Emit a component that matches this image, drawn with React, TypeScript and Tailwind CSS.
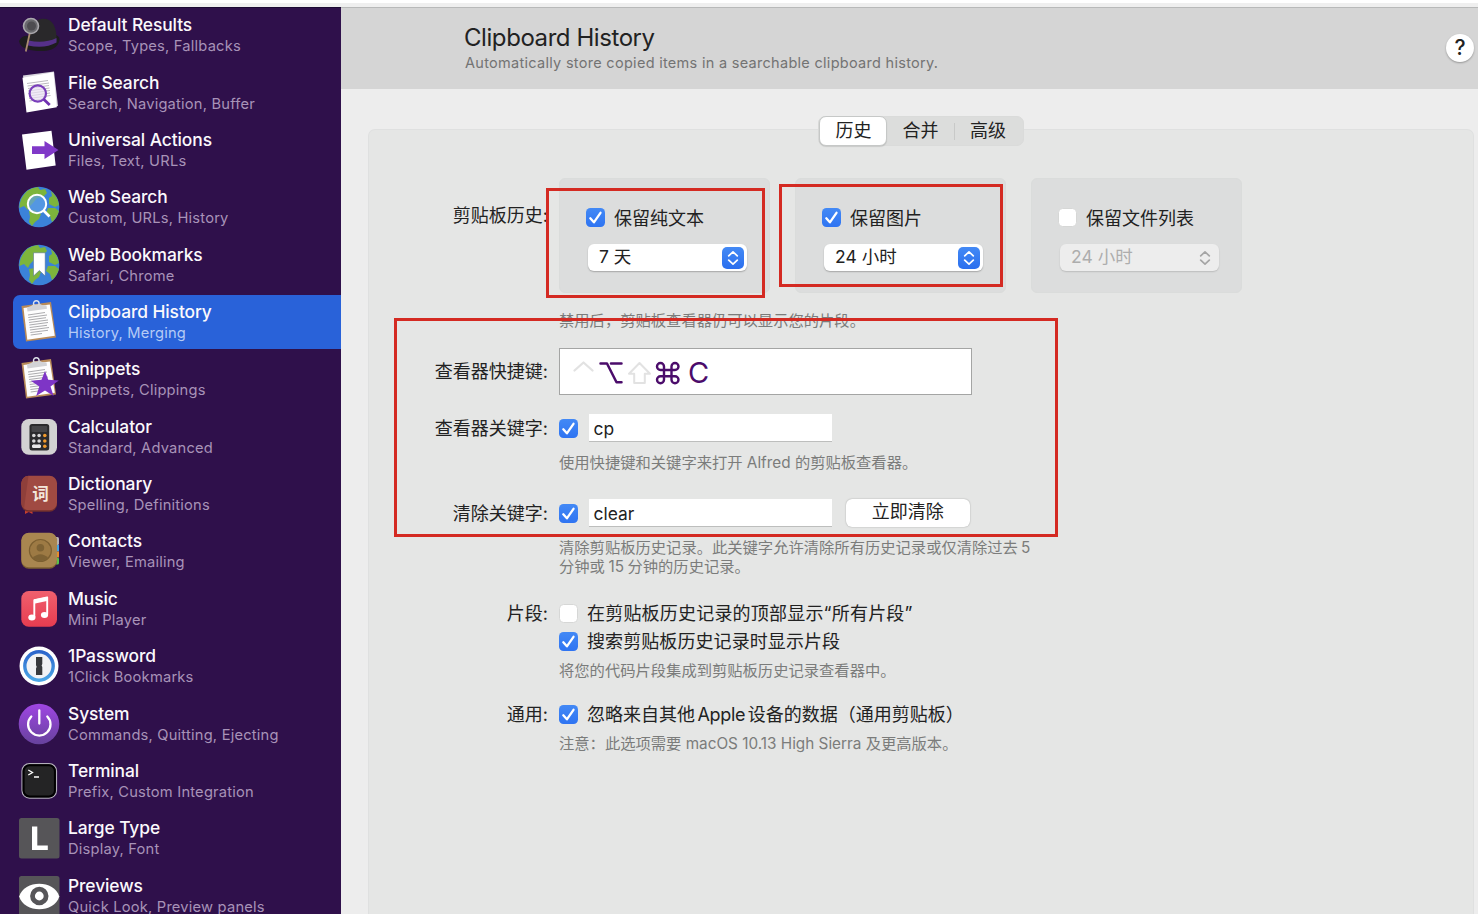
import type { ReactNode } from 'react';

function Icon({ children }: { children: ReactNode }) {
  return (
    <svg viewBox="0 0 42 42" className="h-[42px] w-[42px] shrink-0 overflow-visible">
      {children}
    </svg>
  );
}

function HatIcon() {
  return (
    <Icon>
      <path d="M1 27 Q4 21 11 22 L38 21 Q43 23 41 28 C38 36 30 37 23 37 C13 37 2 35 1 27Z" fill="#1d1c1e" />
      <path d="M11 28 C11 15 15 6 24 4.800 C34 4 39 12 38.500 27 Q28 35 11 30Z" fill="#29282a" />
      <path d="M10.500 26.500 Q26 30 38.500 24 V28.500 Q27 35 10 31.500Z" fill="#553089" />
      <path d="M11.800 19 L7.800 37.500" stroke="#a98a70" strokeWidth="1.800" />
      <circle cx="13" cy="12" r="7.500" fill="#6a6a6e" stroke="#aaa8ad" strokeWidth="1.600" />
      <circle cx="13.500" cy="12" r="4.500" fill="#4d4c50" />
    </Icon>
  );
}

function FileSearchIcon() {
  return (
    <Icon>
      <path d="M5 3.500 L36 -.5 L40 34 L9 39Z" fill="#d9d6de" />
      <path d="M4.500 5.700 L35.500 .3 L38.800 35.300 L8.500 40.600Z" fill="#fff" />
      <g stroke="#a9a7ad" strokeWidth=".8">
        <path d="M9 11.500 L30 8.500 M9.500 14 L31 11 M10 16.500 L31 13.500 M10 19 L31.500 16 M10.500 21.500 L32 18.500 M11 24 L32 21 M11 26.500 L32.500 23.500 M11.500 29 L25 27" />
      </g>
      <circle cx="19.800" cy="21.500" r="8.200" fill="#e9e0f3" fillOpacity=".7" stroke="#7a3fbb" strokeWidth="2.200" />
      <path d="M25.700 27.300 L31.700 33" stroke="#7030b0" strokeWidth="2.800" />
    </Icon>
  );
}

function ActionsIcon() {
  return (
    <Icon>
      <path d="M4 5.500 L33.500 1.800 L37.700 36.500 L8.500 40.800Z" fill="#fff" />
      <path d="M14 17.300 H26.500 V12 L40.500 21 L26.500 30 V25 H14Z" fill="#8038c8" />
    </Icon>
  );
}

function Globe() {
  return (
    <>
      <circle cx="21" cy="21" r="20.300" fill="#3b82d9" />
      <g fill="#7db53c">
        <path d="M9 5 Q14 1.500 20 1 L22 4 L27 3 L29 7 L25 11 L19 12 L15 17 L12 20 L10 24 L6 20 L1.500 22 Q1 13 9 5Z" />
        <path d="M11 25 L17 24 L23 28 L21 33 L17 36 L14 40 L11 36 L12 31Z" />
        <path d="M33 5 Q40 11 41 19 L37 21 L31 18 L31 12 L34 10Z" />
        <path d="M30 22 L37 22 L41 25 Q39 32 34 36 L32 30 L28 27Z" />
      </g>
    </>
  );
}

function WebSearchIcon() {
  return (
    <Icon>
      <Globe />
      <circle cx="19" cy="18" r="9.200" fill="#5fa0e6" fillOpacity=".7" stroke="#fff" strokeWidth="2" />
      <path d="M25.500 24.500 L31.500 30.500" stroke="#fff" strokeWidth="2.600" />
    </Icon>
  );
}

function BookmarkIcon() {
  return (
    <Icon>
      <Globe />
      <path d="M15.500 8.800 H27.200 V32 L21.400 26.500 L15.500 32Z" fill="#fff" stroke="#48678a" strokeWidth=".5" />
    </Icon>
  );
}

function Board() {
  return (
    <>
      <path d="M3.500 5 L33 1 L38 36.500 L8 40.500Z" fill="#b98b58" />
      <path d="M5.500 7 L31.800 3.500 L36.800 34.800 L9.300 38.800Z" fill="#fdfdfd" />
      <g stroke="#a2a2a5" strokeWidth=".9">
        <path d="M10 14 L27 11.500 M10.300 16.500 L29 14 M10.700 19 L28 16.700 M11 21.500 L30 19 M11.400 24 L30 21.500 M11.700 26.500 L29 24.300 M12 29 L31 26.500 M12.400 31.500 L30 29.300 M12.700 34 L24 32.500" />
      </g>
      <circle cx="18.300" cy="2.500" r="2.800" fill="none" stroke="#dfe3ea" strokeWidth="1.400" />
      <path d="M9 6.500 L13 5 L15 3.800 L22 3 L24 4 L28.500 4.500 L29 7.800 L9.500 10.500Z" fill="#d2d3d6" />
    </>
  );
}

function ClipboardIcon() {
  return (
    <Icon>
      <Board />
    </Icon>
  );
}

function SnippetsIcon() {
  return (
    <Icon>
      <Board />
      <path d="M27 13 L30.200 21.800 L40.800 22.400 L32.500 28.500 L35.600 38 L27 32.600 L18.200 38 L21.300 28.500 L12.800 22.700 L23.500 21.800Z" fill="#7e35c6" />
    </Icon>
  );
}

function CalculatorIcon() {
  const dots = [15.8, 21.1, 26.8];
  return (
    <Icon>
      <rect x="3.300" y="3" width="35.700" height="35.700" rx="7.500" fill="#d3d2d3" />
      <rect x="11.500" y="8" width="19.700" height="26.500" rx="2.500" fill="#2b2b2d" />
      <rect x="13.500" y="10" width="15.700" height="6" rx=".8" fill="#454548" />
      {[19.5, 25, 30.3].map((y, row) =>
        dots.map((x, col) => (
          <circle key={`${x}-${y}`} cx={x} cy={y} r="1.800" fill={col === 2 ? '#f09a2c' : row === 2 ? '#e8e8e8' : '#d8d8d8'} />
        )),
      )}
      <rect x="14" y="28.600" width="9" height="3.400" rx="1.700" fill="#e8e8e8" />
    </Icon>
  );
}

function DictionaryIcon() {
  return (
    <Icon>
      <path d="M7 36 H14.500 V41 L10.800 39 L7 41Z" fill="#c8402e" />
      <rect x="3.300" y="3.500" width="35.700" height="35.200" rx="7.500" fill="#72302c" />
      <rect x="3.300" y="2.800" width="35.700" height="34.500" rx="7.500" fill="#a04a42" />
      <path d="M10.500 2.800 A7.300 7.300 0 0 0 3.300 10 V30 A7.300 7.300 0 0 0 6 35.500Z" fill="#8f3f3a" />
      <text x="22.500" y="26.500" fontSize="16.500" fontWeight="700" textAnchor="middle" fill="#f3e7db" fontFamily="Noto Sans CJK SC, sans-serif">词</text>
    </Icon>
  );
}

function ContactsIcon() {
  return (
    <Icon>
      <rect x="33" y="7" width="8" height="8" rx="1.500" fill="#b9b4b4" />
      <rect x="33" y="15" width="8" height="6.500" fill="#46a4e4" />
      <rect x="33" y="21.500" width="8" height="6" fill="#e58e2c" />
      <rect x="33" y="27.500" width="8" height="7" rx="1.500" fill="#5ac14b" />
      <rect x="3.300" y="3.500" width="35.700" height="35.200" rx="7.500" fill="#7e6031" />
      <rect x="3.300" y="2.800" width="35.700" height="34.500" rx="7.500" fill="#a98650" />
      <circle cx="22.400" cy="20.500" r="11" fill="#9d7a44" stroke="#7c5f31" strokeWidth="1.200" />
      <circle cx="22.400" cy="17.700" r="3.800" fill="#7e6234" />
      <path d="M14.500 28 Q22.400 20.500 30.300 28 Q22.400 34.500 14.500 28Z" fill="#7e6234" />
    </Icon>
  );
}

function MusicIcon() {
  return (
    <Icon>
      <defs>
        <linearGradient id="music" x2="0" y2="1">
          <stop stopColor="#f0606e" />
          <stop offset="1" stopColor="#e63c50" />
        </linearGradient>
      </defs>
      <rect x="3.300" y="3" width="35.700" height="35.700" rx="7.500" fill="url(#music)" />
      <path d="M16.300 29 V12.300 L29.200 9.500 V26.500" fill="none" stroke="#fff" strokeWidth="1.900" strokeLinejoin="round" />
      <path d="M16 11.500 L30 8.700 V12.800 L16 15.800Z" fill="#fff" />
      <ellipse cx="13.900" cy="29.500" rx="3.600" ry="2.900" fill="#fff" />
      <ellipse cx="26.500" cy="27" rx="3.600" ry="2.900" fill="#fff" />
    </Icon>
  );
}

function OnePasswordIcon() {
  return (
    <Icon>
      <defs>
        <linearGradient id="ring" x2="0" y2="1">
          <stop stopColor="#2c66cc" />
          <stop offset="1" stopColor="#4ba6e6" />
        </linearGradient>
      </defs>
      <circle cx="21" cy="21" r="19.500" fill="#fff" />
      <circle cx="21" cy="21" r="14.200" fill="#f1f2f4" stroke="url(#ring)" strokeWidth="3.400" />
      <path d="M18 12 H24.300 V19 L23.600 20.500 L24.300 22 V30 H18 V23.500 L18.700 21.800 L18 20.300Z" fill="#37393c" />
    </Icon>
  );
}

function SystemIcon() {
  return (
    <Icon>
      <defs>
        <linearGradient id="power" x2="0" y2="1">
          <stop stopColor="#a046e4" />
          <stop offset="1" stopColor="#66429c" />
        </linearGradient>
      </defs>
      <circle cx="21" cy="21" r="20.300" fill="url(#power)" />
      <path d="M13.300 13.500 A11.200 11.200 0 1 0 29.300 13.500 M21.300 7.300 V20.500" fill="none" stroke="#fff" strokeWidth="2.300" strokeLinecap="round" />
    </Icon>
  );
}

function TerminalIcon() {
  return (
    <Icon>
      <rect x="4" y="3.600" width="34.500" height="34.500" rx="7.500" fill="#1f1f20" stroke="#b3aebb" strokeWidth="1.200" />
      <rect x="5.600" y="5.200" width="31.300" height="31.300" rx="6" fill="#242425" stroke="#000" strokeWidth="2" />
      <path d="M10.300 10 L14.500 12.500 L10.300 15 M16 17 H21" fill="none" stroke="#fff" strokeWidth="1.300" />
    </Icon>
  );
}

function LargeTypeIcon() {
  return (
    <Icon>
      <rect x="1" y="1" width="40.500" height="40.500" rx="2.500" fill="#565558" />
      <path d="M14 9.500 H19.300 V28.500 H29.800 V33 H14Z" fill="#fff" />
    </Icon>
  );
}

function PreviewsIcon() {
  return (
    <Icon>
      <rect x="1" y="1" width="40.500" height="40.500" rx="2.500" fill="#565558" />
      <path d="M1.200 21.500 C6 4.500 36.500 4.500 41.300 21.500 C36.500 38.500 6 38.500 1.200 21.500Z" fill="#fff" />
      <circle cx="21.300" cy="21" r="6.800" fill="#fff" stroke="#565558" strokeWidth="4.800" />
    </Icon>
  );
}

type Item = { title: string; sub: string; icon: ReactNode; active?: boolean };

const items: Item[] = [
  { title: 'Default Results', sub: 'Scope, Types, Fallbacks', icon: <HatIcon /> },
  { title: 'File Search', sub: 'Search, Navigation, Buffer', icon: <FileSearchIcon /> },
  { title: 'Universal Actions', sub: 'Files, Text, URLs', icon: <ActionsIcon /> },
  { title: 'Web Search', sub: 'Custom, URLs, History', icon: <WebSearchIcon /> },
  { title: 'Web Bookmarks', sub: 'Safari, Chrome', icon: <BookmarkIcon /> },
  { title: 'Clipboard History', sub: 'History, Merging', icon: <ClipboardIcon />, active: true },
  { title: 'Snippets', sub: 'Snippets, Clippings', icon: <SnippetsIcon /> },
  { title: 'Calculator', sub: 'Standard, Advanced', icon: <CalculatorIcon /> },
  { title: 'Dictionary', sub: 'Spelling, Definitions', icon: <DictionaryIcon /> },
  { title: 'Contacts', sub: 'Viewer, Emailing', icon: <ContactsIcon /> },
  { title: 'Music', sub: 'Mini Player', icon: <MusicIcon /> },
  { title: '1Password', sub: '1Click Bookmarks', icon: <OnePasswordIcon /> },
  { title: 'System', sub: 'Commands, Quitting, Ejecting', icon: <SystemIcon /> },
  { title: 'Terminal', sub: 'Prefix, Custom Integration', icon: <TerminalIcon /> },
  { title: 'Large Type', sub: 'Display, Font', icon: <LargeTypeIcon /> },
  { title: 'Previews', sub: 'Quick Look, Preview panels', icon: <PreviewsIcon /> },
];

function Sidebar() {
  return (
    <nav className="w-[341px] shrink-0 overflow-hidden bg-[#2f104b] pl-[13px] shadow-[inset_0_1px_0_#1c0a33]">
      <div className="-mt-[0.300px]">
        {items.map((item) => (
          <div key={item.title} className="flex h-[57.350px] items-center">
            <div
              className={
                item.active
                  ? 'flex h-[54px] flex-1 items-center gap-2 rounded-l-[7px] bg-[#2962d9] pl-[5px]'
                  : 'flex h-[54px] flex-1 items-center gap-2 pl-[5px]'
              }
            >
              {item.icon}
              <div className="pt-[1.500px] whitespace-nowrap">
                <div className="text-[17.400px] leading-[21.500px] font-medium tracking-[-0.090px] text-[#fbf9fc]">{item.title}</div>
                <div className={item.active ? 'pt-[0.500px] text-[14.700px] leading-[21.500px] tracking-[0.200px] text-[#b5cbf5]' : 'pt-[0.500px] text-[14.700px] leading-[21.500px] tracking-[0.200px] text-[#a893b8]'}>
                  {item.sub}
                </div>
              </div>
            </div>
          </div>
        ))}
      </div>
    </nav>
  );
}

function Check({ on = true }: { on?: boolean }) {
  return on ? (
    <span className="flex h-[19px] w-[19px] shrink-0 items-center justify-center rounded-[4.500px] bg-linear-to-b from-[#4389f5] to-[#2f74f2]">
      <svg viewBox="0 0 19 19" className="h-[19px] w-[19px]">
        <path d="M4.300 10.300 L7.900 14.300 L14.500 4.800" fill="none" stroke="#fff" strokeWidth="2.300" strokeLinecap="round" strokeLinejoin="round" />
      </svg>
    </span>
  ) : (
    <span className="h-[19px] w-[19px] shrink-0 rounded-[4.500px] border border-[#d6d7d6] bg-white" />
  );
}

function Chevrons({ className }: { className: string }) {
  return (
    <svg viewBox="0 0 22 22" className={className}>
      <path d="M6.700 8.800 L11 4.800 L15.300 8.800 M6.700 13.200 L11 17.200 L15.300 13.200" fill="none" stroke="currentColor" strokeWidth="1.700" strokeLinecap="round" strokeLinejoin="round" />
    </svg>
  );
}

function Card({ label, value, on }: { label: string; value: string; on: boolean }) {
  return (
    <div className="h-[115px] w-[210.500px] rounded-[6px] border border-[#dadcdb] bg-[#dcdddd] pt-[28px] pl-[26px]">
      <div className="flex h-[20px] items-center gap-[9px] text-[18px] text-[#222]">
        <Check on={on} />
        <span className="mt-[2px]">{label}</span>
      </div>
      <div
        className={
          on
            ? 'mt-[17px] ml-[1.500px] flex h-[27px] w-[159px] items-center justify-between rounded-[6px] bg-white pr-[3px] pl-[11.500px] text-[17.500px] text-[#222] shadow-[0_1px_1.500px_rgba(0,0,0,0.25)]'
            : 'mt-[17px] ml-[1.500px] flex h-[27px] w-[159px] items-center justify-between rounded-[6px] bg-[#ededed] pr-[3px] pl-[11.500px] text-[17.500px] text-[#adadad] shadow-[0_1px_1.500px_rgba(0,0,0,0.15)]'
        }
      >
        <span className="-mt-px">{value}</span>
        {on ? (
          <Chevrons className="h-[22px] w-[22px] rounded-[5px] bg-linear-to-b from-[#4389f5] to-[#2b6fee] text-white" />
        ) : (
          <Chevrons className="h-[22px] w-[22px] text-[#a5a5a5]" />
        )}
      </div>
    </div>
  );
}

function Row({ label, className, children }: { label?: string; className: string; children: ReactNode }) {
  return (
    <div className={`flex gap-[11px] ${className}`}>
      <div className="w-[179px] shrink-0 text-right text-[18px] whitespace-nowrap text-[#222]">{label}</div>
      {children}
    </div>
  );
}

function Hint({ className, children }: { className: string; children: ReactNode }) {
  return (
    <Row className={className}>
      <div className="-mt-px text-[15.300px] leading-[20px] whitespace-nowrap text-[#7b7c7b]">{children}</div>
    </Row>
  );
}

function Field({ value }: { value: string }) {
  return (
    <div className="-mt-px ml-[11px] flex h-[28px] w-[243px] items-center border-b border-[#bdbebd] bg-white pl-[4.500px] text-[17.400px] text-[#222]">
      <span className="mt-[5px]">{value}</span>
    </div>
  );
}

function Hotkey() {
  return (
    <div className="flex h-[47px] w-[412.500px] items-center border border-[#a4a5a4] bg-white pl-[12px]">
      <svg viewBox="0 0 110 32" className="mt-[2px] h-[32px] w-[110px]" fill="none" strokeLinecap="round" strokeLinejoin="round">
        <path d="M2.500 13.500 L11.500 5.500 L20.500 13.500" stroke="#e2e2e2" strokeWidth="2.300" />
        <path d="M28.500 6.500 H35 L44.500 25.300 H49.500 M39 6.500 H49.500" stroke="#4b0c6b" strokeWidth="2.500" />
        <path d="M67.500 6 L78 16.800 H72.800 V26 H62.200 V16.800 H57Z" stroke="#e2e2e2" strokeWidth="2" />
        <path
          d="M92 12.500 V9.500 A3.500 3.500 0 1 0 88.500 13 H103 A3.500 3.500 0 1 0 99.500 9.500 V22.700 A3.500 3.500 0 1 0 103 19.200 H88.500 A3.500 3.500 0 1 0 92 22.700Z"
          stroke="#4b0c6b"
          strokeWidth="2.400"
        />
      </svg>
      <span className="mt-[3px] ml-[6px] text-[29px] leading-[32px] text-[#4b0c6b]">C</span>
    </div>
  );
}

function Tabs() {
  return (
    <div className="mx-auto -mt-[14px] flex h-[30px] w-[206px] items-center rounded-[7px] border border-[#dadbda] bg-[#dcdddc] text-[18px] text-[#222]">
      <div className="flex h-[30px] w-[68px] items-center justify-center rounded-[7px] border border-[#c6c8c7] bg-white pb-[2px] pl-px shadow-[0_1px_1px_rgba(0,0,0,0.12)]">历史</div>
      <div className="flex h-full w-[67px] items-center justify-center pb-[2px]">合并</div>
      <div className="h-[17px] w-px bg-[#c8c9c8]" />
      <div className="flex h-full flex-1 items-center justify-center pr-[2px] pb-[2px]">高级</div>
    </div>
  );
}

export default function App() {
  return (
    <div className="relative flex h-[914px] w-[1478px] flex-col overflow-hidden bg-white font-['Inter','Noto_Sans_CJK_SC',sans-serif]" lang="zh-CN">
      <div className="mt-[3px] h-[4px] shrink-0 bg-[#efefef]" />
      <div className="flex min-h-0 flex-1">
        <Sidebar />
        <main className="flex min-w-0 flex-1 flex-col bg-[#ededed]">
          <header className="flex h-[82px] shrink-0 items-start justify-between border-t border-[#b8b9b9] bg-[#d5d5d5] pr-[4px] pl-[123px]">
            <div className="whitespace-nowrap">
              <h1 className="mt-[15px] text-[24px] leading-[30px] tracking-[-0.430px] text-[#222]">Clipboard History</h1>
              <p className="ml-px text-[14.500px] leading-[20px] tracking-[0.290px] text-[#737373]">Automatically store copied items in a searchable clipboard history.</p>
            </div>
            <div className="mt-[26px] flex h-[28px] w-[28px] items-center justify-center rounded-full bg-white text-[21px] font-medium text-[#222] shadow-[0_1px_2px_rgba(0,0,0,0.3)]">?</div>
          </header>
          <section className="mt-[40px] mr-[4px] ml-[27px] flex-1 rounded-t-[7px] border border-b-0 border-[#dfe0e0] bg-[#e5e6e5]">
            <Tabs />
            <Row label="剪贴板历史:" className="mt-[32px] leading-[75px]">
              <div className="flex gap-[25.500px] leading-normal">
                <Card label="保留纯文本" value="7 天" on />
                <Card label="保留图片" value="24 小时" on />
                <Card label="保留文件列表" value="24 小时" on={false} />
              </div>
            </Row>
            <Hint className="mt-[19px]">禁用后，剪贴板查看器仍可以显示您的片段。</Hint>
            <Row label="查看器快捷键:" className="mt-[17px] items-center">
              <Hotkey />
            </Row>
            <Row label="查看器关键字:" className="mt-[19px] h-[28px] items-center">
              <div className="flex items-center">
                <Check />
                <Field value="cp" />
              </div>
            </Row>
            <Hint className="mt-[12px]">使用快捷键和关键字来打开 Alfred 的剪贴板查看器。</Hint>
            <Row label="清除关键字:" className="mt-[26px] h-[28px] items-center">
              <div className="flex items-center">
                <Check />
                <Field value="clear" />
                <div className="-mt-px ml-[13.500px] flex h-[28px] w-[124.500px] items-center justify-center rounded-[6px] bg-white pb-[2px] text-[18px] text-[#222] shadow-[0_0_1.500px_rgba(0,0,0,0.35)]">立即清除</div>
              </div>
            </Row>
            <Hint className="mt-[12px] h-[19px]">
              清除剪贴板历史记录。此关键字允许清除所有历史记录或仅清除过去<span className="ml-[3px]">5</span>
            </Hint>
            <Hint className="h-[19px]">
              分钟或<span className="mx-[3.500px]">15</span>分钟的历史记录。
            </Hint>
            <Row label="片段:" className="mt-[23px] h-[27px] items-center">
              <div className="flex items-center gap-[9px] text-[18px] whitespace-nowrap text-[#222]">
                <Check on={false} />
                <span className="tracking-[0.200px]">在剪贴板历史记录的顶部显示“所有片段”</span>
              </div>
            </Row>
            <Row className="h-[28px] items-center">
              <div className="flex items-center gap-[9px] text-[18px] whitespace-nowrap text-[#222]">
                <Check />
                <span className="tracking-[0.080px]">搜索剪贴板历史记录时显示片段</span>
              </div>
            </Row>
            <Hint className="mt-[7px]">将您的代码片段集成到剪贴板历史记录查看器中。</Hint>
            <Row label="通用:" className="mt-[20px] h-[27px] items-center">
              <div className="flex items-center gap-[9px] text-[18px] whitespace-nowrap text-[#222]">
                <Check />
                <span>
                  忽略来自其他<span className="mx-[2.500px] tracking-[-0.300px]">Apple</span>设备的数据（通用剪贴板）
                </span>
              </div>
            </Row>
            <Hint className="mt-[7px]">注意：此选项需要 macOS 10.13 High Sierra 及更高版本。</Hint>
          </section>
        </main>
      </div>
      <div className="absolute top-[188px] left-[546px] h-[110px] w-[219px] border-[3px] border-[#d42a22]" />
      <div className="absolute top-[184px] left-[779px] h-[103px] w-[224px] border-[3px] border-[#d42a22]" />
      <div className="absolute top-[318px] left-[394px] h-[219px] w-[664px] border-[3px] border-[#d42a22]" />
    </div>
  );
}
